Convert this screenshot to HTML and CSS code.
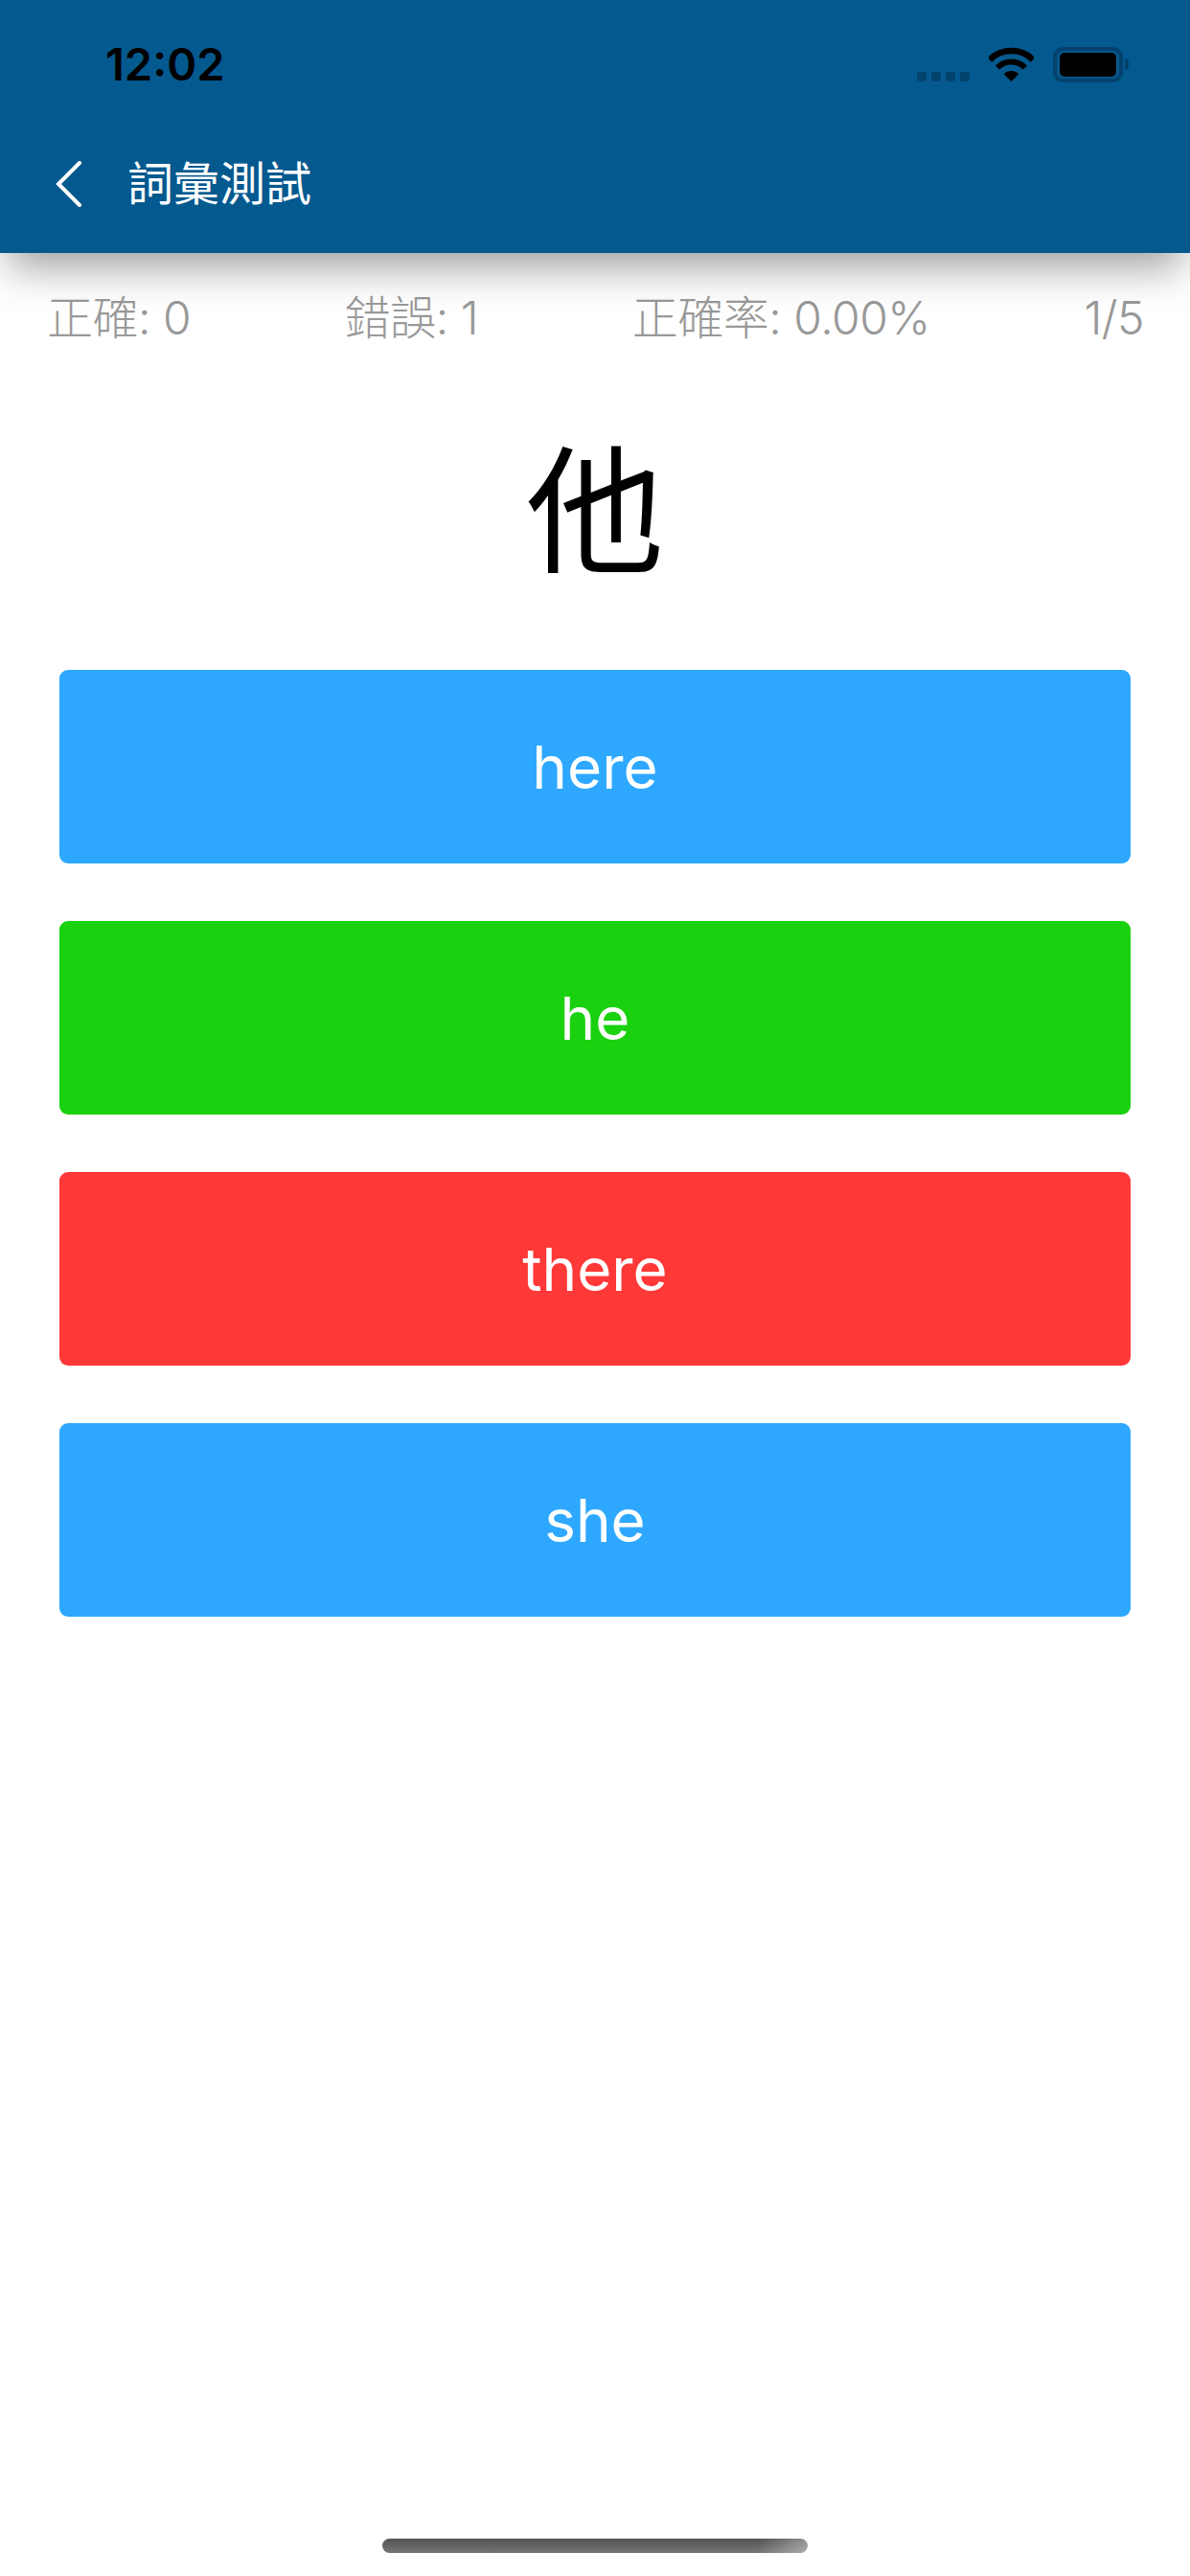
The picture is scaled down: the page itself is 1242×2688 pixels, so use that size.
FILE: index.html
```html
<!DOCTYPE html>
<html lang="zh-Hant">
<head>
<meta charset="utf-8">
<title>詞彙測試</title>
<link rel="stylesheet" href="styles.css">
</head>
<body>
<div class="screen">
  <header class="header">
    <div class="status">
      <span class="time">12:02</span>
      <div class="status-icons">
        <div class="signal"><i></i><i></i><i></i><i></i></div>
        <svg class="wifi" viewBox="0 0 47 36" width="47" height="36">
          <path d="M23.5 36L15.7 28.2A11 11 0 0 1 31.3 28.2Z" fill="#000"/>
          <path d="M9 21.5A20.5 20.5 0 0 1 38 21.5" fill="none" stroke="#000" stroke-width="6"/>
          <path d="M.9 13.4A32 32 0 0 1 46.1 13.4" fill="none" stroke="#000" stroke-width="6.5"/>
        </svg>
        <div class="battery"><div class="battery-fill"></div></div>
        <div class="battery-nub"></div>
      </div>
    </div>
    <nav class="nav">
      <svg class="back" viewBox="0 0 28 48" width="28" height="48">
        <path d="M25 2L3 24L25 46" fill="none" stroke="#fff" stroke-width="4" stroke-linecap="round" stroke-linejoin="miter"/>
      </svg>
      <h1 class="title">詞彙測試</h1>
    </nav>
  </header>
  <section class="stats">
    <span>正確: 0</span>
    <span>錯誤: 1</span>
    <span>正確率: 0.00%</span>
    <span>1/5</span>
  </section>
  <div class="word">他</div>
  <section class="options">
    <button class="option blue">here</button>
    <button class="option green">he</button>
    <button class="option red">there</button>
    <button class="option blue">she</button>
  </section>
  <div class="home-bar"></div>
</div>
</body>
</html>
```
FILE: styles.css
```css
* { box-sizing: border-box; }
html, body { margin: 0; padding: 0; background: #fff; }
.screen {
  width: 1242px;
  height: 2688px;
  display: flex;
  flex-direction: column;
  overflow: hidden;
  font-family: Inter, "Noto Sans CJK TC", sans-serif;
}
.header {
  height: 264px;
  background: #04598f;
  box-shadow: 0 24px 40px -8px rgba(0,0,0,.36);
  display: flex;
  flex-direction: column;
  position: relative;
}
.status {
  height: 120px;
  padding: 0 64px 0 110px;
  display: flex;
  justify-content: space-between;
  align-items: flex-start;
}
.time {
  margin-top: 37px;
  font-size: 47px;
  line-height: 60px;
  font-weight: 600;
  color: #000;
}
.status-icons {
  margin-top: 49px;
  height: 37px;
  display: flex;
  align-items: flex-end;
}
.signal { display: flex; gap: 5px; margin-right: 20px; margin-bottom: 1px; }
.signal i { width: 10px; height: 10px; border-radius: 3px; background: #03426c; display: block; }
.wifi { display: block; margin-right: 20px; margin-bottom: 1px; }
.battery {
  width: 73px;
  height: 37px;
  border: 4px solid #03426c;
  border-radius: 11px;
  padding: 2px 3px;
}
.battery-fill { width: 100%; height: 100%; background: #000; border-radius: 5px; }
.battery-nub {
  width: 4px;
  height: 12px;
  margin: 0 0 13px 2px;
  background: #03426c;
  border-radius: 0 7px 7px 0;
}
.nav {
  height: 144px;
  padding: 0 0 0 58px;
  display: flex;
  align-items: flex-start;
}
.back { display: block; margin-top: 48px; }
.title {
  margin: 42px 0 0 47px;
  font-size: 48px;
  line-height: 60px;
  font-weight: 400;
  color: #fff;
}
.stats {
  margin-top: 40px;
  padding: 0 48px 0 49px;
  height: 56px;
  display: flex;
  justify-content: space-between;
  font-size: 48px;
  line-height: 56px;
  font-weight: 300;
  letter-spacing: -.5px;
  color: #999;
}
.word {
  margin-top: 103px;
  height: 144px;
  text-align: center;
  font-size: 144px;
  line-height: 144px;
  color: #000;
}
.options {
  margin: 92px 62px 0;
  display: flex;
  flex-direction: column;
  gap: 60px;
}
.option {
  height: 202px;
  border: 0;
  border-radius: 9px;
  color: #fff;
  font: 400 62px Inter, sans-serif;
}
.blue { background: #2ea8ff; }
.green { background: #19d10f; }
.red { background: #ff3838; }
.home-bar {
  width: 444px;
  height: 15px;
  margin: auto auto 24px;
  border-radius: 8px;
  background:
    linear-gradient(110deg, rgba(255,255,255,0) 88%, rgba(255,255,255,.4) 100%),
    linear-gradient(180deg, #545454, #757575);
}
```
